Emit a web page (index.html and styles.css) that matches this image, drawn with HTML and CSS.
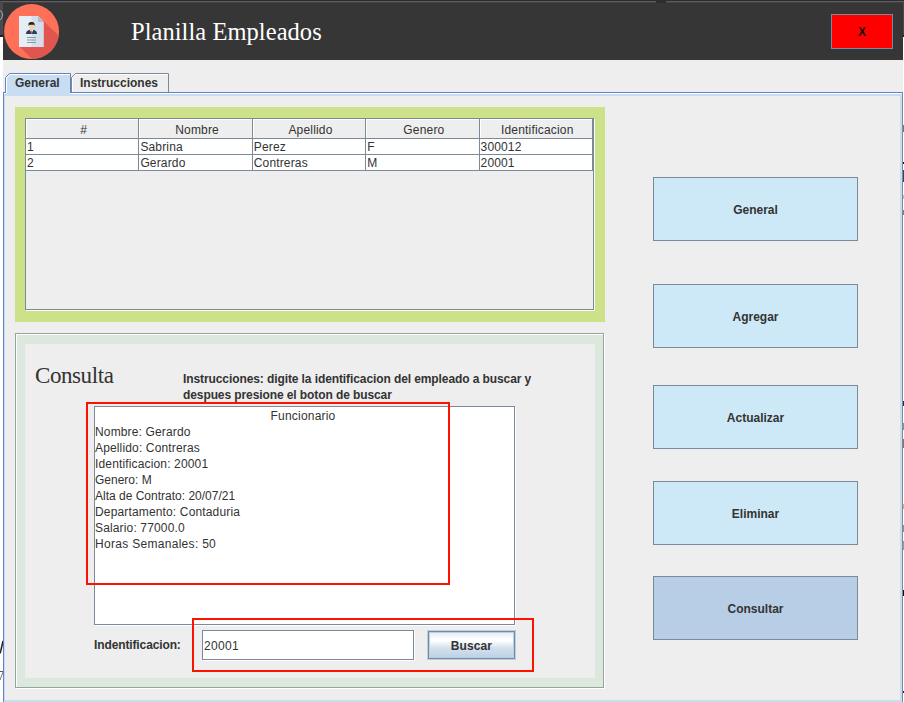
FILE: index.html
```html
<!DOCTYPE html>
<html lang="es">
<head>
<meta charset="utf-8">
<title>Planilla Empleados</title>
<link rel="stylesheet" href="styles.css">
</head>
<body>
<div class="desktop">
  <svg class="backdrop" width="904" height="702" aria-hidden="true">
    <rect width="904" height="702" fill="#fff"/>
    <rect width="904" height="36" fill="#4a4a4e"/>
    <rect y="35" width="904" height="2" fill="#1d1d1f"/>
    <rect width="904" height="1" fill="#2d2d30"/>
    <rect y="1" width="904" height="1" fill="#5c5c60"/>
    <rect y="2" width="904" height="1" fill="#434347"/>
    <rect x="656" width="10" height="3" fill="#2d2d30"/>
    <path d="M0 10.500q2.500 1 2.500 4.500t-2.500 5" fill="none" stroke="#aaa"/>
    <path d="M3 641l-2 9q-.5 3-1 3" fill="none" stroke="#222" stroke-width="1.500"/>
    <path d="M0 671.500h3" stroke="#555"/>
    <path d="M3 672l-3 8" stroke="#777"/>
    <g>
      <rect x="903" y="125" width="1" height="7" fill="#777780"/>
      <rect x="903" y="162" width="1" height="2" fill="#111"/>
      <rect x="903" y="170" width="1" height="12" fill="#234866"/>
      <rect x="903" y="195" width="1" height="4" fill="#dcae8c"/>
      <rect x="903" y="210" width="1" height="5" fill="#8a7a80"/>
      <rect x="903" y="401" width="1" height="5" fill="#103060"/>
      <rect x="903" y="423" width="1" height="7" fill="#8b8f96"/>
      <rect x="903" y="439" width="1" height="9" fill="#93705f"/>
      <rect x="903" y="504" width="1" height="5" fill="#e2a868"/>
      <rect x="903" y="525" width="1" height="7" fill="#9a8f88"/>
      <rect x="903" y="541" width="1" height="9" fill="#a89888"/>
      <rect x="903" y="590" width="1" height="6" fill="#0b0b30"/>
      <rect x="903" y="691" width="1" height="2" fill="#103060"/>
    </g>
  </svg>
  <div class="window">
    <header class="titlebar">
      <svg class="logo" width="56" height="56" viewBox="0 0 56 56" role="img" aria-label="Logo">
        <defs><clipPath id="disc"><circle cx="27.600" cy="27.600" r="27.500"/></clipPath></defs>
        <circle cx="27.600" cy="27.600" r="27.500" fill="#ff7058"/>
        <path d="M15.500 42.500L39.500 17L60 37V60H33Z" fill="#e1554f" clip-path="url(#disc)"/>
        <path d="M15 12H34L39.500 18V43H15Z" fill="#e6eef5"/>
        <path d="M27.500 12H34L39.500 18V43H27.500Z" fill="#d3deea"/>
        <path d="M34 12L39.500 18H34Z" fill="#a9bfd5"/>
        <path d="M22 30C22 27 23.500 26.200 27.500 25.500C31.500 26.200 33 27 33 30Z" fill="#26415d"/>
        <path d="M25.800 25.600H29.400L27.600 29.500Z" fill="#fff"/>
        <path d="M27.200 26.500H28L28.300 29.800H26.900Z" fill="#e1554f"/>
        <ellipse cx="27.600" cy="22.300" rx="2.700" ry="3.300" fill="#f5cfa5"/>
        <path d="M24.500 22V19.500Q25 17.500 28 18Q31 18 30.700 22L30 20.800H25.500Z" fill="#222"/>
        <path d="M23 33.500H32M23 36H32M23 38.500H32" stroke="#8a99a8" stroke-width="1"/>
      </svg>
      <h1 class="title">Planilla Empleados</h1>
      <button class="close">X</button>
    </header>
    <nav class="tabs">
      <svg class="tab-shape" width="900" height="22" aria-hidden="true">
        <path d="M3 22V5L7 1H67V22Z" fill="#c8ddf2"/>
        <path d="M2.500 20V4.500L6.500 .5H67.500V20" fill="none" stroke="#6382bf"/>
        <path d="M68.500 19V4.500L72.500 .5H165.500V19" fill="#eee" stroke="#7a8a99"/>
        <path d="M69.500 19V5L73 1.500H165" fill="none" stroke="#fff"/>
        <path d="M3.500 20V5L7 1.500H67" fill="none" stroke="#fff"/>
        <path d="M67.500 .5V19.500" stroke="#6382bf"/>
      </svg>
      <span class="tab tab-general">General</span>
      <span class="tab tab-help">Instrucciones</span>
    </nav>
    <main class="page">
      <div class="left">
        <section class="list">
          <div class="scroll">
            <table>
              <thead><tr><th>#</th><th>Nombre</th><th>Apellido</th><th>Genero</th><th>Identificacion</th></tr></thead>
              <tbody>
                <tr><td>1</td><td>Sabrina</td><td>Perez</td><td>F</td><td>300012</td></tr>
                <tr><td>2</td><td>Gerardo</td><td>Contreras</td><td>M</td><td>20001</td></tr>
              </tbody>
            </table>
          </div>
        </section>
        <section class="query">
          <div class="query-head">
            <h2>Consulta</h2>
            <p class="help"><span>Instrucciones: digite la identificacion del empleado a buscar y</span><br><span>despues presione el boton de buscar</span></p>
          </div>
          <div class="result">
            <div class="result-title">Funcionario</div>
            <div>Nombre: Gerardo</div>
            <div>Apellido: Contreras</div>
            <div>Identificacion: 20001</div>
            <div class="gender">Genero: M</div>
            <div class="date">Alta de Contrato: 20/07/21</div>
            <div>Departamento: Contaduria</div>
            <div>Salario: 77000.0</div>
            <div class="hours">Horas Semanales: 50</div>
            <span class="mark mark-result"></span>
          </div>
          <div class="search">
            <label for="ident">Indentificacion:</label>
            <input id="ident" value="20001">
            <button class="find">Buscar</button>
            <span class="mark mark-search"></span>
          </div>
        </section>
      </div>
      <aside class="actions">
        <button>General</button>
        <button>Agregar</button>
        <button>Actualizar</button>
        <button>Eliminar</button>
        <button class="active">Consultar</button>
      </aside>
    </main>
  </div>
</div>
</body>
</html>
```
FILE: styles.css
```css
* { box-sizing: border-box; }
body {
  margin: 0;
  overflow: hidden;
  font: 12px/16px "Liberation Sans", Arial, sans-serif;
  color: #333;
}
button, input { font: inherit; color: inherit; margin: 0; border-radius: 0; }
h1, h2, p { margin: 0; font-weight: normal; }
.desktop { position: relative; width: 904px; height: 702px; padding: 3px 1px 0 3px; }
.backdrop { position: absolute; left: 0; top: 0; }
.window { position: relative; height: 699px; background: #eee; display: flex; flex-direction: column; }

.titlebar { height: 57px; background: #363636; display: flex; align-items: center; padding: 0 10px 0 1px; }
.logo { flex: none; }
.title { flex: 1; margin-left: 71px; font: 24.5px/28px "Liberation Serif", serif; letter-spacing: .05px; color: #fff; }
.close { width: 62px; height: 35px; padding: 0; border: 1px solid #7a8a99; background: #f00; color: #111; font-weight: bold; }

.tabs { position: relative; height: 32px; padding-top: 13px; display: flex; flex: none; }
.tab-shape { position: absolute; left: 0; top: 13px; z-index: 1; }
.tab { position: relative; z-index: 2; height: 19px; line-height: 20px; font-weight: bold; white-space: nowrap; }
.tab-general { width: 65px; padding-left: 12px; }
.tab-help { padding-left: 12px; }

.page {
  flex: 1;
  display: flex;
  border-top: 1px solid #6382bf;
  border-left: 1px solid #6382bf;
  border-right: 1px solid #7a8a99;
  box-shadow: inset 0 1px #fff, inset 0 3px #c8ddf2, inset 1px 0 #c8ddf2, inset -2px 0 #c8ddf2, inset 0 -2px #c8ddf2;
}
.left { width: 590px; margin: 14px 0 0 11px; }
.list { height: 215px; padding: 11px 10px 11px; background: #cde188; }
.scroll { height: 192px; border: 1px solid #7a8a99; background: #eee; width: 569px; box-shadow: 1px 1px #fff; }
table { width: 567px; table-layout: fixed; border-collapse: separate; border-spacing: 0; }
th, td { border-right: 1px solid #7a8a99; border-bottom: 1px solid #7a8a99; white-space: nowrap; }
th { height: 20px; padding: 3px 0 0 3px; font-weight: normal; line-height: 16px; text-align: center; box-shadow: inset 1px 1px #fff; letter-spacing: .18px; }
td { height: 16px; padding: 1px 0 0 1px; line-height: 14px; background: #fff; letter-spacing: .15px; }

.query { width: 589px; height: 355px; margin-top: 11px; border: 1px solid #94a59a; box-shadow: 1px 1px #fff, inset 1px 1px #fff, inset 0 10px #dce7de, inset 9px 0 #dce7de, inset -8px 0 #dce7de, inset 0 -9px #dce7de; }
.query-head { display: flex; height: 72px; padding: 28px 0 0 19px; }
h2 { width: 148px; font: 23px/28px "Liberation Serif", serif; letter-spacing: -.42px; }
.help { padding-top: 9px; font-weight: bold; letter-spacing: -.095px; white-space: nowrap; }
.result { position: relative; width: 421px; height: 219px; margin-left: 78px; padding-top: 1px; border: 1px solid #7a8a99; background: #fff; box-shadow: 1px 1px #fff; letter-spacing: .15px; }
.result-title { padding-right: 3px; text-align: center; letter-spacing: .2px; }
.gender, .date { letter-spacing: 0; }
.hours { letter-spacing: .3px; }
.search { position: relative; display: flex; align-items: center; height: 30px; margin: 5px 0 0 78px; }
label { width: 108px; font-weight: bold; line-height: 30px; letter-spacing: -.12px; }
input { width: 212px; height: 30px; padding: 2px 1px 0; border: 1px solid #7a8a99; background: #fff; box-shadow: 1px 1px #fff; outline: none; letter-spacing: .3px; }
.find {
  width: 89px; height: 30px; margin-left: 13px; padding: 1px 0 0;
  border: 1px solid #b8cfe5;
  box-shadow: inset 0 0 0 1px #7a8a99, inset 0 0 0 2px #b8cfe5;
  background: linear-gradient(#dde8f3 0%, #fff 30%, #fff 35%, #d5e1ed 60%, #b8cfe5 100%);
  font-weight: bold; letter-spacing: .1px;
}
.mark { position: absolute; border: 2px solid #ff1100; pointer-events: none; }
.mark-result { left: -9px; top: -5px; width: 364px; height: 183px; }
.mark-search { left: 98px; top: -12px; width: 342px; height: 54px; }

.actions { display: grid; grid-template-rows: 107px 101px 96px 95px 64px; width: 205px; margin: 84px 0 0 48px; align-content: start; }
.actions button { height: 64px; padding: 2px 0 0; border: 1px solid #7a8a99; background: #cde8f6; font-weight: bold; letter-spacing: 0; }
.actions .active { background: #b8cee6; }
```
